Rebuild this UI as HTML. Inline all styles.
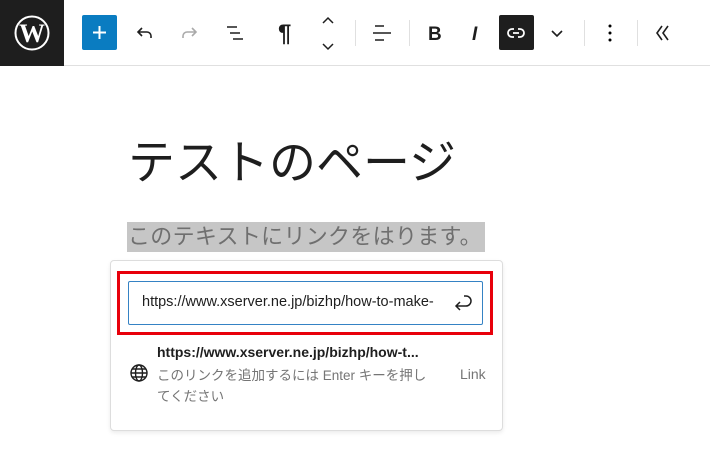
<!DOCTYPE html><html><head><meta charset="utf-8"><style>
body{margin:0;width:710px;height:450px;background:#fff;font-family:"Liberation Sans","Noto Sans CJK JP",sans-serif;position:relative;overflow:hidden}
.a{position:absolute}
.top{left:0;top:0;width:710px;height:65px;border-bottom:1px solid #e0e0e0}
.logo{left:0;top:0;width:64px;height:66px;background:#1e1e1e}
.sep{width:1px;height:26px;top:20px;background:#e0e0e0}
svg{position:absolute}
</style></head><body>
<div class="a top"></div>
<div class="a logo"><svg width="36" height="36" style="left:14px;top:15px" viewBox="0 0 36 36"><circle cx="18" cy="18" r="16.5" fill="none" stroke="#fff" stroke-width="2"/><text x="18" y="27" text-anchor="middle" font-family="Liberation Serif" font-weight="bold" font-size="26" fill="#fff">W</text></svg></div>
<div class="a" style="left:82px;top:15px;width:35px;height:35px;background:#0a7cc1;border-radius:2px"></div>
<svg width="35" height="35" style="left:82px;top:15px" viewBox="0 0 35 35"><path d="M17.5 11v13M11 17.5h13" stroke="#fff" stroke-width="2"/></svg>
<svg width="24" height="24" style="left:133px;top:21px" viewBox="0 0 24 24"><path d="M9 7L5 11l4 4M5 11h9a4 4 0 014 4v2" fill="none" stroke="#1e1e1e" stroke-width="1.6"/></svg>
<svg width="24" height="24" style="left:177px;top:21px" viewBox="0 0 24 24"><path d="M15 7l4 4-4 4M19 11h-9a4 4 0 00-4 4v2" fill="none" stroke="#aaa" stroke-width="1.6"/></svg>
<svg width="24" height="24" style="left:223px;top:21px" viewBox="0 0 24 24"><path d="M4 6h10M7 12h10M10 18h10" stroke="#1e1e1e" stroke-width="1.6"/></svg>
<div class="a" style="left:278px;top:20px;font-size:24px;font-weight:bold;color:#1e1e1e">¶</div>
<svg width="16" height="40" style="left:320px;top:13px" viewBox="0 0 16 40"><path d="M3 10l5-5 5 5M3 31l5 5 5-5" fill="none" stroke="#1e1e1e" stroke-width="1.5"/></svg>
<div class="a sep" style="left:355px"></div>
<svg width="24" height="24" style="left:370px;top:21px" viewBox="0 0 24 24"><path d="M5 5h9M3 12h18M5 19h9" stroke="#1e1e1e" stroke-width="1.6"/></svg>
<div class="a sep" style="left:409px"></div>
<div class="a" style="left:428px;top:24px;font-size:19px;font-weight:bold;color:#1e1e1e">B</div>
<div class="a" style="left:472px;top:24px;font-size:19px;font-style:italic;font-weight:bold;color:#1e1e1e">I</div>
<div class="a" style="left:499px;top:15px;width:35px;height:35px;background:#1e1e1e;border-radius:2px"></div>
<svg width="24" height="24" style="left:504px;top:21px" viewBox="0 0 24 24"><path d="M10 8H8a4 4 0 000 8h2M14 8h2a4 4 0 010 8h-2M9 12h6" fill="none" stroke="#fff" stroke-width="1.8"/></svg>
<svg width="16" height="16" style="left:549px;top:25px" viewBox="0 0 16 16"><path d="M3 6l5 5 5-5" fill="none" stroke="#1e1e1e" stroke-width="1.6"/></svg>
<div class="a sep" style="left:584px"></div>
<svg width="6" height="20" style="left:607px;top:23px" viewBox="0 0 6 20"><circle cx="3" cy="3" r="1.5"/><circle cx="3" cy="10" r="1.5"/><circle cx="3" cy="17" r="1.5"/></svg>
<div class="a sep" style="left:637px"></div>
<svg width="20" height="20" style="left:653px;top:23px" viewBox="0 0 20 20"><path d="M9 3l-5 7 5 7M15 3l-5 7 5 7" fill="none" stroke="#1e1e1e" stroke-width="1.6"/></svg>
<div class="a" style="left:128px;top:133px;font-size:47px;color:#1e1e1e;line-height:60px">テストのページ</div>
<div class="a" style="left:127px;top:222px;width:358px;height:30px;background:#c6c6c6"></div>
<div class="a" style="left:128px;top:222px;font-size:22px;color:#6f6f6f;line-height:30px;letter-spacing:0.3px">このテキストにリンクをはります。</div>
<div class="a" style="left:110px;top:260px;width:391px;height:169px;border:1px solid #ddd;border-radius:4px;box-shadow:0 2px 4px rgba(0,0,0,.08);background:#fff"></div>
<div class="a" style="left:117px;top:271px;width:370px;height:58px;border:3px solid #e8000b"></div>
<div class="a" style="left:128px;top:281px;width:353px;height:42px;border:1px solid #3582c4;border-radius:2px"></div>
<div class="a" style="left:142px;top:294px;font-size:14.5px;color:#1e1e1e">https://www.xserver.ne.jp/bizhp/how-to-make-</div>
<svg width="24" height="24" style="left:451px;top:291px" viewBox="0 0 24 24"><path d="M13 5h2a5 5 0 010 10H5M9 11l-4 4 4 4" fill="none" stroke="#1e1e1e" stroke-width="1.5"/></svg>
<div class="a" style="left:157px;top:344px;font-size:14px;font-weight:bold;color:#1e1e1e">https://www.xserver.ne.jp/bizhp/how-t...</div>
<svg width="20" height="20" style="left:129px;top:363px" viewBox="0 0 20 20" fill="none" stroke="#1e1e1e" stroke-width="1.4"><circle cx="10" cy="10" r="8"/><ellipse cx="10" cy="10" rx="3.5" ry="8"/><path d="M2 10h16M3.5 6h13M3.5 14h13"/></svg>
<div class="a" style="left:157px;top:365px;width:300px;font-size:13.5px;color:#757575;line-height:21px;white-space:nowrap">このリンクを追加するには Enter キーを押し<br>てください</div>
<div class="a" style="left:460px;top:366px;font-size:14px;color:#757575">Link</div>
</body></html>
